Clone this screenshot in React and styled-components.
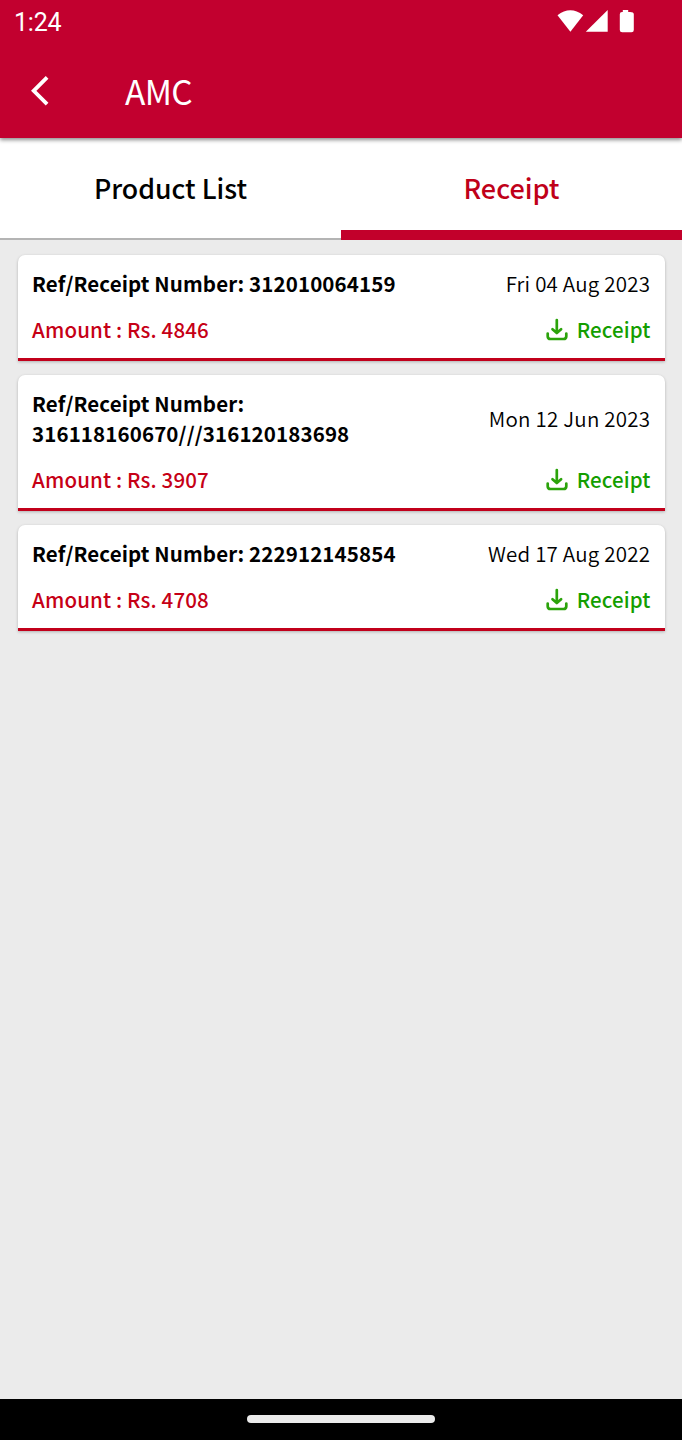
import React from "react";
import styled, { createGlobalStyle } from "styled-components";

const Global = createGlobalStyle`
  * { box-sizing: border-box; }
  body { margin: 0; background: #ebebeb; font-family: "Noto Sans CJK JP", "Noto Sans", sans-serif; }
`;

const Screen = styled.div`
  width: 682px;
  height: 1440px;
  display: flex;
  flex-direction: column;
  background: #ebebeb;
  overflow: hidden;
`;

const Header = styled.header`
  height: 138px;
  flex: none;
  background: #c2002f;
  color: #fff;
  box-shadow: 0 2px 4px rgba(0, 0, 0, 0.45);
  z-index: 1;
`;

const StatusBar = styled.div`
  height: 42px;
  padding: 0 47px 0 14px;
  display: flex;
  align-items: center;
  justify-content: space-between;
`;

const Clock = styled.span`
  font: 400 25px/30px Roboto, sans-serif;
  letter-spacing: -0.2px;
  padding-top: 3px;
`;

const StatusIcons = styled.svg`
  display: block;
  width: 78px;
  height: 24px;
`;

const TitleBar = styled.div`
  height: 96px;
  padding: 0 0 0 30px;
  display: flex;
  align-items: center;
`;

const BackButton = styled.button`
  width: 95px;
  height: 32px;
  padding: 0;
  border: 0;
  background: none;
  color: inherit;
  display: flex;

  svg { display: block; }
`;

const Title = styled.h1`
  margin: 2px 0 0;
  font-size: 33.5px;
  font-weight: 400;
  line-height: 40px;
  letter-spacing: -0.7px;
`;

const Tabs = styled.nav`
  height: 102px;
  flex: none;
  display: flex;
  background: #fff;
`;

const Tab = styled.button`
  flex: 1;
  padding: 0;
  border: 0;
  border-bottom: ${(p) => (p.$active ? "10px solid #c2002b" : "2px solid #b4b4b4")};
  height: 102px;
  background: none;
  display: flex;
  justify-content: center;
  color: ${(p) => (p.$active ? "#c00019" : "#000")};
  font-family: inherit;
  font-size: ${(p) => (p.$active ? 27 : 26.7)}px;
  font-weight: 500;
  line-height: 40px;

  span { padding-top: 30px; }
`;

const List = styled.main`
  flex: 1;
  padding: 15px 17px 0 18px;
  display: flex;
  flex-direction: column;
  gap: 14px;
`;

const Card = styled.article`
  padding: 13px 15px 14px 14px;
  background: #fff;
  border-bottom: 3px solid #c2001b;
  border-radius: 7px 7px 0 0;
  box-shadow: 0 1px 3px rgba(0, 0, 0, 0.25);
  display: flex;
  flex-direction: column;
  gap: 16px;
`;

const Row = styled.div`
  display: flex;
  justify-content: space-between;
  align-items: center;
`;

const Reference = styled.div`
  width: 380px;
  font-size: 20.5px;
  font-weight: 700;
  line-height: 30px;
  letter-spacing: 0.12px;
`;

const DateText = styled.time`
  font-size: 20.5px;
  font-weight: 350;
  line-height: 30px;
  letter-spacing: 0.22px;
  margin-right: -0.2px;
  white-space: nowrap;
`;

const Amount = styled.div`
  color: #c60016;
  font-size: 20.5px;
  font-weight: 500;
  line-height: 30px;
  letter-spacing: 0.15px;
`;

const Download = styled.button`
  padding: 0;
  border: 0;
  background: none;
  color: #149e00;
  display: flex;
  align-items: center;
  gap: 9px;
  margin-right: -0.5px;
  font-family: inherit;
  font-size: 20.5px;
  font-weight: 500;
  line-height: 30px;
  letter-spacing: 0.13px;

  svg { display: block; margin-top: 1px; }
`;

const NavBar = styled.footer`
  height: 41.5px;
  flex: none;
  background: #000;
  display: flex;
  justify-content: center;
`;

const Handle = styled.div`
  width: 188px;
  height: 7.5px;
  margin-top: 16.5px;
  border-radius: 4px;
  background: #ebebeb;
`;

const receipts = [
  { number: "312010064159", date: "Fri 04 Aug 2023", amount: "4846" },
  { number: "316118160670///316120183698", date: "Mon 12 Jun 2023", amount: "3907" },
  { number: "222912145854", date: "Wed 17 Aug 2022", amount: "4708" },
];

function DownloadIcon() {
  return (
    <svg width="22" height="23" viewBox="0 0 22 23" fill="none" stroke="#2ba30b" strokeWidth="2.7" strokeLinecap="round" strokeLinejoin="round">
      <path d="M10.8 2V14.8M6.5 11.2L10.8 15L15.1 11.2M1.7 15.5V18.2Q1.7 21 4.5 21H17.5Q20.3 21 20.3 18.2V15.5" />
    </svg>
  );
}

export default function App() {
  return (
    <>
      <Global />
      <Screen>
        <Header>
          <StatusBar>
            <Clock>1:24</Clock>
            <StatusIcons viewBox="0 0 78 24" fill="#fff">
              <path d="M0.5 6.2Q13.3 -3.6 26.2 6.2L13.4 22.8Z" />
              <path d="M28.8 22.8L50.7 1V22.8Z" />
              <path d="M65.8 1H71.2V3H73Q76.8 3 76.8 5.2V21Q76.8 23.2 74.5 23.2H65.2Q62.8 23.2 62.8 21V5.2Q62.8 3 65 3H65.8Z" />
            </StatusIcons>
          </StatusBar>
          <TitleBar>
            <BackButton aria-label="Back">
              <svg width="20" height="32" viewBox="0 0 20 32" fill="none" stroke="#fff" strokeWidth="3.8">
                <path d="M17.1 3.4L3.7 16.8L17.1 30.2" />
              </svg>
            </BackButton>
            <Title>AMC</Title>
          </TitleBar>
        </Header>
        <Tabs>
          <Tab><span>Product List</span></Tab>
          <Tab $active><span>Receipt</span></Tab>
        </Tabs>
        <List>
          {receipts.map((r) => (
            <Card key={r.number}>
              <Row>
                <Reference>Ref/Receipt Number: {r.number}</Reference>
                <DateText>{r.date}</DateText>
              </Row>
              <Row>
                <Amount>Amount : Rs. {r.amount}</Amount>
                <Download>
                  <DownloadIcon />
                  <span>Receipt</span>
                </Download>
              </Row>
            </Card>
          ))}
        </List>
        <NavBar>
          <Handle />
        </NavBar>
      </Screen>
    </>
  );
}
